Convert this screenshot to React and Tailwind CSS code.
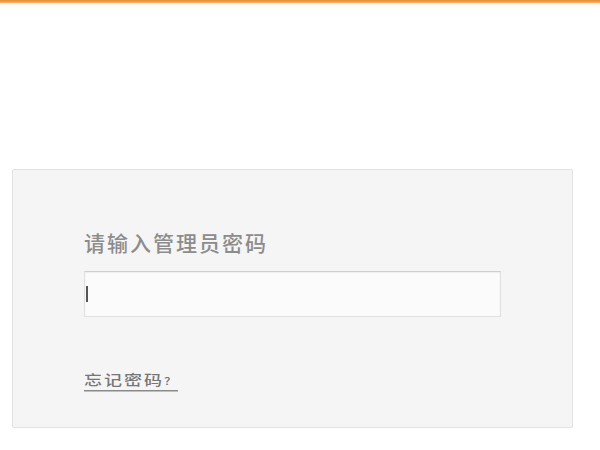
export default function App() {
  return (
    <div className="w-[600px] h-[450px] bg-white overflow-hidden" style={{ fontFamily: '"Noto Sans CJK SC", "Liberation Sans", sans-serif' }}>
      {/* top accent bar */}
      <div className="h-[3px] bg-gradient-to-b from-[#e8892a] to-[#f5b56c]" />
      <div className="h-[6px] bg-gradient-to-b from-[#fdf3e6] to-white" />

      {/* login card */}
      <div className="ml-[12px] mt-[160px] w-[561px] h-[259px] bg-[#f5f5f5] border border-[#e2e2e2] rounded-[2px] pl-[71px] pt-[58px]">
        <div className="text-[21px] leading-[28px] tracking-[2px] font-medium text-[#8c8c8c]">请输入管理员密码</div>
        <div className="mt-[15px] w-[417px] h-[46px] bg-[#fbfbfb] border border-[#e0e0e0] border-t-[#cfcfcf] shadow-[inset_0_1px_2px_rgba(0,0,0,0.06)] flex items-center pl-[1px]">
          <span className="block w-[2px] h-[16px] bg-[#555]" />
        </div>
        <a href="#" className="inline-block mt-[50px] origin-left scale-y-75 text-[18px] leading-[22px] tracking-[2px] font-medium text-[#777] border-b-2 border-[#8a8a8a] pb-[1px] no-underline">
          忘记密码<span className="text-[13px]">?</span>{"\u00a0"}
        </a>
      </div>
    </div>
  );
}
